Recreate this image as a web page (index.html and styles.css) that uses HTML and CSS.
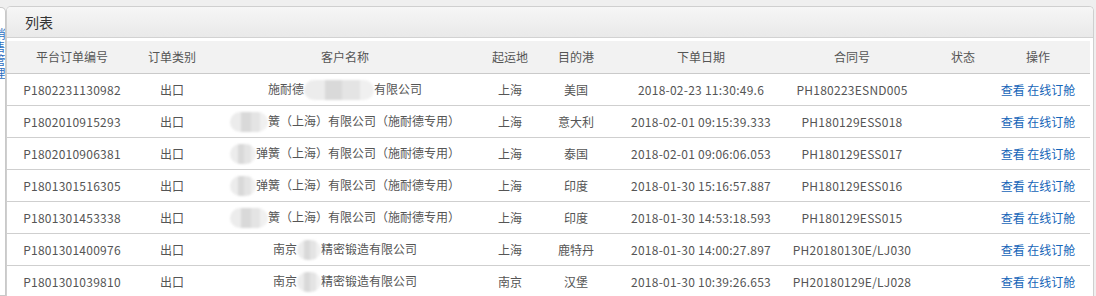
FILE: index.html
```html
<!DOCTYPE html>
<html lang="zh">
<head>
<meta charset="utf-8">
<title>列表</title>
<link rel="stylesheet" href="styles.css">
</head>
<body>
<div class="page">
  <div class="sidetab"><span class="sidetab-text">销售管理</span></div>
  <div class="panel">
    <div class="panel-title">列表</div>
    <div class="table-wrap">
      <div class="row head">
        <div class="c c1">平台订单编号</div>
        <div class="c c2">订单类别</div>
        <div class="c c3">客户名称</div>
        <div class="c c4">起运地</div>
        <div class="c c5">目的港</div>
        <div class="c c6">下单日期</div>
        <div class="c c7">合同号</div>
        <div class="c c8">状态</div>
        <div class="c c9">操作</div>
      </div>
      <div class="row">
        <div class="c c1 num">P1802231130982</div>
        <div class="c c2">出口</div>
        <div class="c c3">施耐德<span class="blob b70"></span>有限公司</div>
        <div class="c c4">上海</div>
        <div class="c c5">美国</div>
        <div class="c c6 num">2018-02-23 11:30:49.6</div>
        <div class="c c7 num">PH180223ESND005</div>
        <div class="c c8"></div>
        <div class="c c9"><a class="lnk" href="#">查看</a> <a class="lnk" href="#">在线订舱</a></div>
      </div>
      <div class="row">
        <div class="c c1 num">P1802010915293</div>
        <div class="c c2">出口</div>
        <div class="c c3"><span class="blob b38"></span>簧（上海）有限公司（施耐德专用）</div>
        <div class="c c4">上海</div>
        <div class="c c5">意大利</div>
        <div class="c c6 num">2018-02-01 09:15:39.333</div>
        <div class="c c7 num">PH180129ESS018</div>
        <div class="c c8"></div>
        <div class="c c9"><a class="lnk" href="#">查看</a> <a class="lnk" href="#">在线订舱</a></div>
      </div>
      <div class="row">
        <div class="c c1 num">P1802010906381</div>
        <div class="c c2">出口</div>
        <div class="c c3"><span class="blob b26"></span>弹簧（上海）有限公司（施耐德专用）</div>
        <div class="c c4">上海</div>
        <div class="c c5">泰国</div>
        <div class="c c6 num">2018-02-01 09:06:06.053</div>
        <div class="c c7 num">PH180129ESS017</div>
        <div class="c c8"></div>
        <div class="c c9"><a class="lnk" href="#">查看</a> <a class="lnk" href="#">在线订舱</a></div>
      </div>
      <div class="row">
        <div class="c c1 num">P1801301516305</div>
        <div class="c c2">出口</div>
        <div class="c c3"><span class="blob b26"></span>弹簧（上海）有限公司（施耐德专用）</div>
        <div class="c c4">上海</div>
        <div class="c c5">印度</div>
        <div class="c c6 num">2018-01-30 15:16:57.887</div>
        <div class="c c7 num">PH180129ESS016</div>
        <div class="c c8"></div>
        <div class="c c9"><a class="lnk" href="#">查看</a> <a class="lnk" href="#">在线订舱</a></div>
      </div>
      <div class="row">
        <div class="c c1 num">P1801301453338</div>
        <div class="c c2">出口</div>
        <div class="c c3"><span class="blob b38"></span>簧（上海）有限公司（施耐德专用）</div>
        <div class="c c4">上海</div>
        <div class="c c5">印度</div>
        <div class="c c6 num">2018-01-30 14:53:18.593</div>
        <div class="c c7 num">PH180129ESS015</div>
        <div class="c c8"></div>
        <div class="c c9"><a class="lnk" href="#">查看</a> <a class="lnk" href="#">在线订舱</a></div>
      </div>
      <div class="row">
        <div class="c c1 num">P1801301400976</div>
        <div class="c c2">出口</div>
        <div class="c c3">南京<span class="blob b24"></span>精密锻造有限公司</div>
        <div class="c c4">上海</div>
        <div class="c c5">鹿特丹</div>
        <div class="c c6 num">2018-01-30 14:00:27.897</div>
        <div class="c c7 num">PH20180130E/LJ030</div>
        <div class="c c8"></div>
        <div class="c c9"><a class="lnk" href="#">查看</a> <a class="lnk" href="#">在线订舱</a></div>
      </div>
      <div class="row">
        <div class="c c1 num">P1801301039810</div>
        <div class="c c2">出口</div>
        <div class="c c3">南京<span class="blob b24"></span>精密锻造有限公司</div>
        <div class="c c4">南京</div>
        <div class="c c5">汉堡</div>
        <div class="c c6 num">2018-01-30 10:39:26.653</div>
        <div class="c c7 num">PH20180129E/LJ028</div>
        <div class="c c8"></div>
        <div class="c c9"><a class="lnk" href="#">查看</a> <a class="lnk" href="#">在线订舱</a></div>
      </div>
    </div>
  </div>
</div>
</body>
</html>
```
FILE: styles.css
```css
* { box-sizing: border-box; }
html, body { margin: 0; padding: 0; }
body {
  background: #efefef;
  font-family: "Noto Sans CJK SC", "Noto Sans", sans-serif;
  font-size: 12px;
  color: #555;
  overflow: hidden;
}
.page {
  display: flex;
  height: 296px;
  overflow: hidden;
}
.sidetab {
  flex: none;
  width: 6px;
  margin-top: 7px;
  background: #fff;
  border: 1px solid #c9c9c9;
  border-left: none;
  border-radius: 0 5px 0 0;
  overflow: hidden;
  position: relative;
}
.sidetab-text {
  display: block;
  writing-mode: vertical-rl;
  color: #2f6fc0;
  font-size: 12px;
  line-height: 12px;
  margin-top: 20px;
  margin-left: -7px;
  letter-spacing: 1px;
}
.panel {
  flex: none;
  width: 1088px;
  margin-top: 6px;
  background: #fff;
  border: 1px solid #cfcfcf;
  border-bottom: none;
  border-radius: 5px 5px 0 0;
  overflow: hidden;
}
.panel-title {
  height: 31px;
  line-height: 30px;
  padding-left: 18px;
  font-size: 14px;
  color: #333;
  background: linear-gradient(#f6f6f6, #e9e9e9);
  border-bottom: 1px solid #d2d2d2;
}
.table-wrap {
  padding: 3px 3px 0 0;
}
.row {
  display: grid;
  grid-template-columns: 130px 70px 285px 36px 96px 154px 148px 74px 90px;
  height: 32px;
  border-bottom: 1px solid #cfcfcf;
  align-items: center;
  width: 1083px;
}
.row.head {
  height: 33px;
  background: #f2f2f2;
  border-bottom: 1px solid #cacaca;
}
.c {
  text-align: center;
  white-space: nowrap;
  line-height: 20px;
}
.num { letter-spacing: 0.25px; }
.c3 { padding-right: 9px; }
.c9 { padding-right: 14px; }
.lnk {
  color: #1565b8;
  text-decoration: none;
}
.blob {
  display: inline-block;
  height: 20px;
  vertical-align: middle;
  border-radius: 10px;
  background:
    linear-gradient(90deg, #ececec 0 30%, #d9d9d9 30% 55%, #e4e4e4 55% 80%, #f0f0f0 80% 100%);
  filter: blur(1px);
}
.b70 { width: 70px; }
.b38 { width: 38px; }
.b26 { width: 26px; }
.b24 { width: 24px; }
```
